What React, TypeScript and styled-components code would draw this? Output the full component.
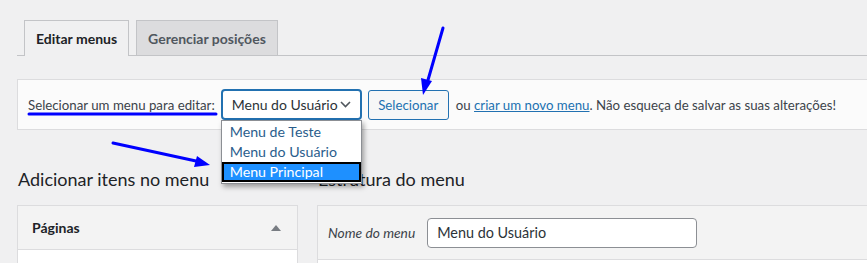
import React from 'react';
import styled, { createGlobalStyle } from 'styled-components';

const GlobalStyle = createGlobalStyle`
    html, body {
        margin: 0;
        padding: 0;
        background: #f0f0f1;
        overflow: hidden;
    }
    body {
        font-family: Lato, "Liberation Sans", sans-serif;
        color: #1d2327;
    }
`;

const Page = styled.div`
    position: relative;
    width: 900px;
    height: 263px;
    padding-left: 17px;
    box-sizing: border-box;
`;

const TabNav = styled.nav`
    display: flex;
    gap: 7px;
    padding: 20px 0 0 7px;
    border-bottom: 1px solid #c3c4c7;
`;

const Tab = styled.div<{ $active?: boolean }>`
    display: flex;
    align-items: center;
    padding: 0 11px;
    box-sizing: border-box;
    border: 1px solid #c3c4c7;
    border-bottom: none;
    margin-bottom: ${ p => p.$active ? '-1px' : '0' };
    height: ${ p => p.$active ? '36px' : '35px' };
    background: ${ p => p.$active ? '#f0f0f1' : '#dcdcde' };
    color: ${ p => p.$active ? '#1d2327' : '#50575e' };
    font-size: 14px;
    font-weight: 700;
`;

const ManageBox = styled.div`
    margin-top: 23px;
    height: 51px;
    box-sizing: border-box;
    display: flex;
    align-items: center;
    padding: 0 10px;
    background: #fbfbfb;
    border: 1px solid #dcdcde;
    border-right: none;
    font-size: 13.25px;
    color: #3c434a;
`;

const Label = styled.span`
    margin-right: 6px;
`;

const SelectBox = styled.div`
    position: relative;
    width: 141px;
    height: 31px;
    box-sizing: border-box;
    display: flex;
    align-items: center;
    justify-content: space-between;
    padding: 0 9px 0 9px;
    border: 2px solid #2271b1;
    border-radius: 4px;
    background: #fff;
    font-size: 14px;
    color: #2c3338;
`;

const Dropdown = styled.ul`
    position: absolute;
    left: -2px;
    top: 29px;
    width: 141px;
    margin: 0;
    padding: 1px 0;
    list-style: none;
    box-sizing: border-box;
    background: #fff;
    border: 1px solid #8c8f94;
    box-shadow: 2px 3px 5px rgba(0, 0, 0, 0.35);
    z-index: 5;
`;

const Option = styled.li<{ $selected?: boolean }>`
    height: 20px;
    line-height: 20px;
    padding-left: 8px;
    font-size: 14.2px;
    color: ${ p => p.$selected ? '#fff' : '#2a5d8c' };
    background: ${ p => p.$selected ? '#1e90ff' : 'transparent' };
    outline: ${ p => p.$selected ? '2px solid #000' : 'none' };
    outline-offset: -2px;
`;

const Button = styled.div`
    margin-left: 6px;
    height: 30px;
    width: 81px;
    box-sizing: border-box;
    display: flex;
    align-items: center;
    justify-content: center;
    border: 1px solid #2271b1;
    border-radius: 3px;
    background: #f6f7f7;
    color: #2271b1;
    font-size: 13.25px;
`;

const Note = styled.span`
    margin-left: 7px;
    color: #3c434a;
`;

const Link = styled.a`
    color: #2271b1;
    text-decoration: underline;
`;

const Columns = styled.div`
    display: flex;
    gap: 19px;
    margin-top: 38px;
`;

const Column = styled.div<{ $width?: string }>`
    width: ${ p => p.$width || 'auto' };
    flex: ${ p => p.$width ? 'none' : '1' };
    display: flex;
    flex-direction: column;
`;

const Heading = styled.h2`
    margin: 0 0 15px 1px;
    font-size: 18px;
    font-weight: 400;
    line-height: 22px;
    color: #1d2327;
`;

const Panel = styled.div`
    border: 1px solid #dcdcde;
    border-bottom: none;
    background: #fff;
    height: 70px;
`;

const PanelHeader = styled.div<{ $height: number; $start?: boolean }>`
    height: ${ p => p.$height }px;
    box-sizing: border-box;
    display: flex;
    align-items: center;
    justify-content: ${ p => p.$start ? 'flex-start' : 'space-between' };
    padding: 0 14px 0 ${ p => p.$start ? 10 : 14 }px;
    background: #f3f3f3;
    border-bottom: 1px solid #dcdcde;
`;

const PanelTitle = styled.span`
    font-size: 14px;
    font-weight: 700;
    color: #1d2327;
`;

const Triangle = styled.span`
    width: 0;
    height: 0;
    border-left: 5px solid transparent;
    border-right: 5px solid transparent;
    border-bottom: 6px solid #787c82;
    margin-right: 2px;
`;

const FieldLabel = styled.label`
    font-size: 13.8px;
    font-style: italic;
    color: #3c434a;
    margin-right: 12px;
`;

const TextInput = styled.div`
    width: 270px;
    height: 30px;
    box-sizing: border-box;
    display: flex;
    align-items: center;
    padding-left: 9px;
    border: 1px solid #8c8f94;
    border-radius: 4px;
    background: #fff;
    font-size: 14.4px;
    color: #2c3338;
`;

const Annotations = styled.svg`
    position: absolute;
    left: 0;
    top: 0;
    pointer-events: none;
    z-index: 10;
`;

const App: React.FC = () => {
    return (
        <>
            <GlobalStyle />
            <Page>
                <TabNav>
                    <Tab $active>Editar menus</Tab>
                    <Tab>Gerenciar posições</Tab>
                </TabNav>

                <ManageBox>
                    <Label>Selecionar um menu para editar:</Label>
                    <SelectBox>
                        Menu do Usuário
                        <svg width="11" height="7" viewBox="0 0 11 7">
                            <path d="M1 1 L5.5 5.5 L10 1" fill="none" stroke="#50575e" strokeWidth="1.6" />
                        </svg>
                        <Dropdown>
                            <Option>Menu de Teste</Option>
                            <Option>Menu do Usuário</Option>
                            <Option $selected>Menu Principal</Option>
                        </Dropdown>
                    </SelectBox>
                    <Button>Selecionar</Button>
                    <Note>
                        ou <Link>criar um novo menu</Link>. Não esqueça de salvar as suas alterações!
                    </Note>
                </ManageBox>

                <Columns>
                    <Column $width="281px">
                        <Heading>Adicionar itens no menu</Heading>
                        <Panel>
                            <PanelHeader $height={ 44 }>
                                <PanelTitle>Páginas</PanelTitle>
                                <Triangle />
                            </PanelHeader>
                        </Panel>
                    </Column>
                    <Column>
                        <Heading>Estrutura do menu</Heading>
                        <Panel>
                            <PanelHeader $height={ 54 } $start>
                                <FieldLabel>Nome do menu</FieldLabel>
                                <TextInput>Menu do Usuário</TextInput>
                            </PanelHeader>
                        </Panel>
                    </Column>
                </Columns>

                <Annotations width="867" height="263" viewBox="0 0 867 263">
                    <line x1="29" y1="114" x2="216" y2="114" stroke="#0000ff" strokeWidth="3" strokeLinecap="round" />
                    <line x1="443" y1="28" x2="428" y2="80" stroke="#0000ff" strokeWidth="3" strokeLinecap="round" />
                    <polygon points="423,95 421,78 432,81" fill="#0000ff" />
                    <line x1="113" y1="143" x2="196" y2="161" stroke="#0000ff" strokeWidth="3" strokeLinecap="round" />
                    <polygon points="210,165 194,167 197,156" fill="#0000ff" />
                </Annotations>
            </Page>
        </>
    );
};

export default App;
